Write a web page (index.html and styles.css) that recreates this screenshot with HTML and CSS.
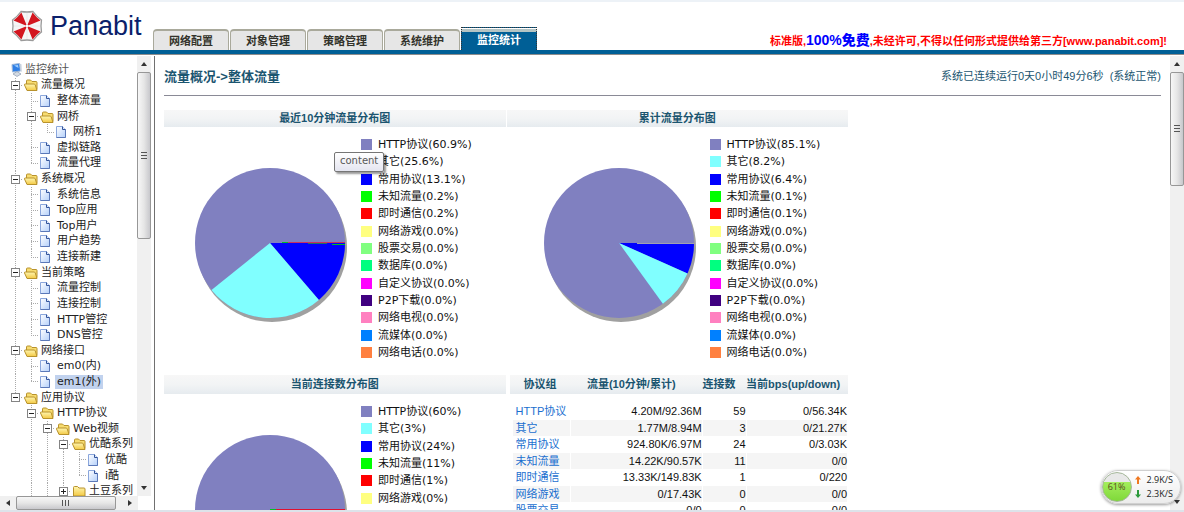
FILE: index.html
```html
<!DOCTYPE html>
<html lang="zh-CN">
<head>
<meta charset="utf-8">
<title>Panabit</title>
<link rel="stylesheet" href="styles.css">
</head>
<body>
<svg class="defs" aria-hidden="true">
  <defs>
    <linearGradient id="gold" x1="0" y1="0" x2="0" y2="1"><stop offset="0" stop-color="#fff6b0"/><stop offset="1" stop-color="#f3c944"/></linearGradient>
    <linearGradient id="sheet" x1="0" y1="0" x2="1" y2="1"><stop offset="0" stop-color="#ffffff"/><stop offset="1" stop-color="#b4d0fa"/></linearGradient>
    <symbol id="open" viewBox="0 0 16 14">
      <path d="M3.500 11.500V3q0-1 1-1h3L9 3.500h4q1 0 1 1v7z" fill="#f7dc70" stroke="#b8922c"/>
      <path d="M4 12.500L1.500 7q-.3-1 .8-1h8.700q.8 0 1.200.8L14 12.500z" fill="url(#gold)" stroke="#b8922c"/>
    </symbol>
    <symbol id="closed" viewBox="0 0 16 14">
      <path d="M2.500 12V3.500q0-1 1-1h3L8 4h5q1 0 1 1v7z" fill="url(#gold)" stroke="#b8922c"/>
    </symbol>
    <symbol id="page" viewBox="0 0 16 14">
      <path d="M1.500 1.500h6l3 3v8h-9z" fill="url(#sheet)" stroke="#8aa6dc"/>
      <path d="M7.500 1.500v3h3" fill="#dfeafc" stroke="#33549b"/>
      <path d="M10.500 4.500v8h-9" fill="none" stroke="#5a78b8"/>
    </symbol>
  </defs>
</svg>

<header class="top">
  <div class="brand">
    <svg class="mark" viewBox="-16 -16 32 32" aria-hidden="true">
      <path d="M-6-14.500Q0-13.500 6-14.500Q9.500-9.500 14.500-6Q13.500 0 14.500 6Q9.500 9.500 6 14.500Q0 13.500-6 14.500Q-9.500 9.500-14.500 6Q-13.500 0-14.500-6Q-9.500-9.500-6-14.500Z" fill="#f6f6f6" stroke="#9a9a9a" stroke-width="1.300"/>
      <g fill="#d3161f">
        <path d="M0 0L-13.500-5.600Q-9-9-5.600-13.500Z"/>
        <path d="M0 0L5.600-13.500Q9-9 13.500-5.600Z"/>
        <path d="M0 0L13.500 5.600Q9 9 5.600 13.500Z"/>
        <path d="M0 0L-5.600 13.500Q-9 9-13.500 5.600Z"/>
      </g>
      <path d="M0-13V13M-13 0H13" stroke="#dcdcdc" stroke-width=".5"/>
      <circle r="1.300" fill="#fff"/>
    </svg>
    <span class="name">Panabit</span>
  </div>
  <nav class="tabs">
    <a href="#net">网络配置</a>
    <a href="#obj">对象管理</a>
    <a href="#policy">策略管理</a>
    <a href="#sys">系统维护</a>
    <a href="#stat" class="on">监控统计</a>
  </nav>
  <p class="notice">标准版,<b>100%免费</b>,未经许可,不得以任何形式提供给第三方[www.panabit.com]!</p>
</header>

<div class="frames">
  <aside class="side">
    <div class="row">
      <ul class="tree">
        <li class="root"><svg class="pc" viewBox="0 0 13 14" aria-hidden="true"><path d="M2 1.500L9.500.5l1 7.500-8 1z" fill="#2f7fe6" stroke="#9db7d8"/><path d="M4 2.500l4-.5.5 3z" fill="#9fd0ff"/><path d="M9.500.5l2 .8.300 7.700-1.300-1z" fill="#c8d2de"/><path d="M3 11l4-2.500 4 2.500-4 2.500z" fill="#d4dbe3" stroke="#8d9bb0" stroke-width=".7"/></svg><a href="#t0">监控统计</a></li>
        <li><i class="v h"><button aria-label="折叠"></button></i><svg><use href="#open"/></svg><a href="#t1">流量概况</a></li>
        <li><i class="v"></i><i class="v h"></i><svg><use href="#page"/></svg><a href="#t2">整体流量</a></li>
        <li><i class="v"></i><i class="v h"><button aria-label="折叠"></button></i><svg><use href="#open"/></svg><a href="#t3">网桥</a></li>
        <li><i class="v"></i><i class="v"></i><i class="l"></i><svg><use href="#page"/></svg><a href="#t4">网桥1</a></li>
        <li><i class="v"></i><i class="v h"></i><svg><use href="#page"/></svg><a href="#t5">虚拟链路</a></li>
        <li><i class="v"></i><i class="l"></i><svg><use href="#page"/></svg><a href="#t6">流量代理</a></li>
        <li><i class="v h"><button aria-label="折叠"></button></i><svg><use href="#open"/></svg><a href="#t7">系统概况</a></li>
        <li><i class="v"></i><i class="v h"></i><svg><use href="#page"/></svg><a href="#t8">系统信息</a></li>
        <li><i class="v"></i><i class="v h"></i><svg><use href="#page"/></svg><a href="#t9">Top应用</a></li>
        <li><i class="v"></i><i class="v h"></i><svg><use href="#page"/></svg><a href="#t10">Top用户</a></li>
        <li><i class="v"></i><i class="v h"></i><svg><use href="#page"/></svg><a href="#t11">用户趋势</a></li>
        <li><i class="v"></i><i class="l"></i><svg><use href="#page"/></svg><a href="#t12">连接新建</a></li>
        <li><i class="v h"><button aria-label="折叠"></button></i><svg><use href="#open"/></svg><a href="#t13">当前策略</a></li>
        <li><i class="v"></i><i class="v h"></i><svg><use href="#page"/></svg><a href="#t14">流量控制</a></li>
        <li><i class="v"></i><i class="v h"></i><svg><use href="#page"/></svg><a href="#t15">连接控制</a></li>
        <li><i class="v"></i><i class="v h"></i><svg><use href="#page"/></svg><a href="#t16">HTTP管控</a></li>
        <li><i class="v"></i><i class="l"></i><svg><use href="#page"/></svg><a href="#t17">DNS管控</a></li>
        <li><i class="v h"><button aria-label="折叠"></button></i><svg><use href="#open"/></svg><a href="#t18">网络接口</a></li>
        <li><i class="v"></i><i class="v h"></i><svg><use href="#page"/></svg><a href="#t19">em0(内)</a></li>
        <li><i class="v"></i><i class="l"></i><svg><use href="#page"/></svg><a href="#t20" class="sel">em1(外)</a></li>
        <li><i class="l"><button aria-label="折叠"></button></i><svg><use href="#open"/></svg><a href="#t21">应用协议</a></li>
        <li><i></i><i class="v h"><button aria-label="折叠"></button></i><svg><use href="#open"/></svg><a href="#t22">HTTP协议</a></li>
        <li><i></i><i class="v"></i><i class="v h"><button aria-label="折叠"></button></i><svg><use href="#open"/></svg><a href="#t23">Web视频</a></li>
        <li><i></i><i class="v"></i><i class="v"></i><i class="v h"><button aria-label="折叠"></button></i><svg><use href="#open"/></svg><a href="#t24">优酷系列</a></li>
        <li><i></i><i class="v"></i><i class="v"></i><i class="v"></i><i class="v h"></i><svg><use href="#page"/></svg><a href="#t25">优酷</a></li>
        <li><i></i><i class="v"></i><i class="v"></i><i class="v"></i><i class="l"></i><svg><use href="#page"/></svg><a href="#t26">i酷</a></li>
        <li><i></i><i class="v"></i><i class="v"></i><i class="v h"><button class="plus" aria-label="展开"></button></i><svg><use href="#closed"/></svg><a href="#t27">土豆系列</a></li>
      </ul>
      <div class="bar"><span class="arrow up"></span><div class="track"><div class="thumb tall"></div></div><span class="arrow down"></span></div>
    </div>
    <div class="hbar"><span class="arrow left"></span><div class="track"><div class="thumb"></div></div><span class="arrow right"></span></div>
  </aside>

  <main class="main">
    <div class="content">
      <div class="title">
        <h1>流量概况-&gt;整体流量</h1>
        <p>系统已连续运行0天0小时49分6秒&nbsp; (系统正常)</p>
      </div>
      <div class="panels">
        <section class="panel">
          <h2>最近10分钟流量分布图</h2>
          <div class="chart">
            <svg class="pie" viewBox="0 0 166 225" aria-hidden="true">
              <circle cx="77" cy="111" r="75" fill="#a0a0a0"/>
              <circle cx="75" cy="107" r="75" fill="#8080c0"/>
              <path d="M75 107L150 107A75 75 0 0 1 123.900 163.900Z" fill="#0000ff"/>
              <path d="M75 107L123.900 163.900A75 75 0 0 1 16.500 153.900Z" fill="#80ffff"/>
              <path d="M87 106.500H93M137 108.500H150" stroke="#00c020"/>
              <path d="M93 106.500H150" stroke="#c83060"/>
              <path d="M113 107.500H132" stroke="#207060"/>
            </svg>
            <ul class="legend">
              <li class="c1">HTTP协议(60.9%)</li><li class="c2">其它(25.6%)</li><li class="c3">常用协议(13.1%)</li><li class="c4">未知流量(0.2%)</li><li class="c5">即时通信(0.2%)</li><li class="c6">网络游戏(0.0%)</li><li class="c7">股票交易(0.0%)</li><li class="c8">数据库(0.0%)</li><li class="c9">自定义协议(0.0%)</li><li class="c10">P2P下载(0.0%)</li><li class="c11">网络电视(0.0%)</li><li class="c12">流媒体(0.0%)</li><li class="c13">网络电话(0.0%)</li>
            </ul>
            <span class="tip">content</span>
          </div>
        </section>
        <section class="panel second">
          <h2>累计流量分布图</h2>
          <div class="chart">
            <svg class="pie" viewBox="0 0 166 225" aria-hidden="true">
              <circle cx="77" cy="111" r="75" fill="#a0a0a0"/>
              <circle cx="75" cy="107" r="75" fill="#8080c0"/>
              <path d="M75 107L150 107A75 75 0 0 1 143.500 137.500Z" fill="#0000ff"/>
              <path d="M75 107L143.500 137.500A75 75 0 0 1 118.900 167.800Z" fill="#80ffff"/>
              <path d="M93 107.500H150" stroke="#a0a0b0"/>
            </svg>
            <ul class="legend">
              <li class="c1">HTTP协议(85.1%)</li><li class="c2">其它(8.2%)</li><li class="c3">常用协议(6.4%)</li><li class="c4">未知流量(0.1%)</li><li class="c5">即时通信(0.1%)</li><li class="c6">网络游戏(0.0%)</li><li class="c7">股票交易(0.0%)</li><li class="c8">数据库(0.0%)</li><li class="c9">自定义协议(0.0%)</li><li class="c10">P2P下载(0.0%)</li><li class="c11">网络电视(0.0%)</li><li class="c12">流媒体(0.0%)</li><li class="c13">网络电话(0.0%)</li>
            </ul>
          </div>
        </section>
        <section class="panel lower">
          <h2>当前连接数分布图</h2>
          <div class="chart">
            <svg class="pie" viewBox="0 0 166 225" aria-hidden="true">
              <circle cx="77" cy="111" r="75" fill="#a0a0a0"/>
              <circle cx="75" cy="107" r="75" fill="#8080c0"/>
              <path d="M75 106.500H81" stroke="#00c020"/>
              <path d="M81 106.500H150" stroke="#e01030"/>
            </svg>
            <ul class="legend">
              <li class="c1">HTTP协议(60%)</li><li class="c2">其它(3%)</li><li class="c3">常用协议(24%)</li><li class="c4">未知流量(11%)</li><li class="c5">即时通信(1%)</li><li class="c6">网络游戏(0%)</li><li class="c7"></li>
            </ul>
          </div>
        </section>
        <section class="panel lower">
          <table>
            <colgroup><col class="w1"><col class="w2"><col class="w3"><col class="w4"></colgroup>
            <thead><tr><th>协议组</th><th>流量(10分钟/累计)</th><th>连接数</th><th>当前bps(up/down)</th></tr></thead>
            <tbody>
              <tr><td><a href="#p1">HTTP协议</a></td><td>4.20M/92.36M</td><td>59</td><td>0/56.34K</td></tr>
              <tr><td><a href="#p2">其它</a></td><td>1.77M/8.94M</td><td>3</td><td>0/21.27K</td></tr>
              <tr><td><a href="#p3">常用协议</a></td><td>924.80K/6.97M</td><td>24</td><td>0/3.03K</td></tr>
              <tr><td><a href="#p4">未知流量</a></td><td>14.22K/90.57K</td><td>11</td><td>0/0</td></tr>
              <tr><td><a href="#p5">即时通信</a></td><td>13.33K/149.83K</td><td>1</td><td>0/220</td></tr>
              <tr><td><a href="#p6">网络游戏</a></td><td>0/17.43K</td><td>0</td><td>0/0</td></tr>
              <tr><td><a href="#p7">股票交易</a></td><td>0/0</td><td>0</td><td>0/0</td></tr>
            </tbody>
          </table>
        </section>
      </div>
    </div>
    <div class="bar"><span class="arrow up"></span><div class="track"><div class="thumb short"></div></div><span class="arrow down"></span></div>
  </main>
</div>

<div class="meter">
  <span class="ball">61%</span>
  <div class="rates">
    <span><svg viewBox="0 0 8 8" aria-hidden="true"><path d="M4 0L7 3.500H5V8H3V3.500H1Z" fill="#f07820"/></svg>2.9K/S</span>
    <span><svg viewBox="0 0 8 8" aria-hidden="true"><path d="M4 8L7 4.500H5V0H3V4.500H1Z" fill="#2c9a3c"/></svg>2.3K/S</span>
  </div>
</div>
</body>
</html>
```
FILE: styles.css
```css
* { box-sizing: border-box; }
body {
  margin: 0;
  height: 100vh;
  display: flex;
  flex-direction: column;
  overflow: hidden;
  background: #fff;
  border-top: 2px solid #edf2f7;
  border-bottom: 2px solid #dde3ea;
  font: 11px/15px "Liberation Sans", "Noto Sans CJK SC", sans-serif;
  color: #222;
}
h1, h2, p, ul { margin: 0; padding: 0; }
ul { list-style: none; }
a { text-decoration: none; color: inherit; }
.defs { position: absolute; width: 0; height: 0; }

/* header */
.top {
  display: flex;
  align-items: flex-end;
  flex: none;
  height: 52px;
  border-bottom: 4px solid #005f96;
  box-shadow: 0 1px #8c8c8c;
}
.brand {
  display: flex;
  align-items: center;
  gap: 7px;
  width: 153px;
  height: 48px;
  padding: 0 0 0 11px;
}
.mark { width: 32px; height: 32px; flex: none; }
.name { font-size: 27px; line-height: 32px; color: #0b1f6b; }
.tabs { display: flex; align-items: flex-end; gap: 1px; }
.tabs a {
  width: 76px;
  height: 21px;
  border: 1px solid #a9a99b;
  border-top-width: 2px;
  border-bottom: 0;
  border-radius: 4px 4px 0 0;
  background: #e6e6e6;
  color: #33332b;
  font-weight: bold;
  line-height: 21px;
  text-align: center;
}
.tabs .on {
  height: 23px;
  border: 1px dotted #333;
  border-bottom: 0;
  border-radius: 0;
  background: linear-gradient(#fff 0 1px, #b4c4c4 1px 4px, #005f96 4px);
  color: #fff;
  line-height: 25px;
}
.notice {
  flex: 1;
  padding: 0 17px 0 0;
  text-align: right;
  color: #f00;
  font-weight: bold;
  line-height: 18px;
  white-space: nowrap;
}
.notice b { font-size: 14px; color: #00f; }

/* frames */
.frames { display: flex; flex: 1; min-height: 0; padding-top: 2px; }
.side { display: flex; flex-direction: column; flex: none; width: 154px; padding-right: 3px; }
.row { display: flex; flex: 1; min-height: 0; overflow: hidden; }
.main { display: flex; flex: 1; min-width: 0; border-left: 1px solid #707070; }

/* tree */
.tree {
  flex: 1;
  min-width: 0;
  display: grid;
  grid-auto-rows: minmax(0, 1fr);
  margin-bottom: -3px;
  padding: 6px 0 0 7px;
  overflow: hidden;
  font-family: "DejaVu Sans", "Noto Sans CJK SC", sans-serif;
}
.tree li { display: flex; align-items: center; min-width: 0; }
.tree i { flex: none; align-self: stretch; display: flex; align-items: center; justify-content: center; width: 16px; background-repeat: no-repeat; }
.tree .v { background-image: repeating-linear-gradient(#aaa 0 1px, transparent 1px 2px); background-size: 1px 100%; background-position: 8px 0; }
.tree .h { background-image: repeating-linear-gradient(#aaa 0 1px, transparent 1px 2px), repeating-linear-gradient(90deg, #aaa 0 1px, transparent 1px 2px); background-size: 1px 100%, 8px 1px; background-position: 8px 0, 8px 50%; }
.tree .l { background-image: repeating-linear-gradient(#aaa 0 1px, transparent 1px 2px), repeating-linear-gradient(90deg, #aaa 0 1px, transparent 1px 2px); background-size: 1px 50%, 8px 1px; background-position: 8px 0, 8px 50%; }
.tree svg { flex: none; width: 16px; height: 14px; }
.tree .root { padding-left: 3px; color: #555; }
.tree .root .pc { width: 13px; }
.tree a { padding: 0 2px; line-height: 14px; white-space: nowrap; }
.tree .sel { background: #c1d2ee; }
.tree button {
  width: 9px;
  height: 9px;
  padding: 0;
  border: 1px solid #848484;
  background: linear-gradient(#222, #222) center / 5px 1px no-repeat #fff;
}
.tree .plus { background: linear-gradient(#222, #222) center / 5px 1px no-repeat, linear-gradient(#222, #222) center / 1px 5px no-repeat #fff; }

/* scroll bars */
.bar { display: flex; flex-direction: column; flex: none; width: 14px; background: #f0f0f0; }
.hbar { display: flex; flex: none; width: 138px; height: 14px; background: #f0f0f0; }
.track { flex: 1; }
.arrow { flex: none; display: grid; place-items: center; width: 16px; height: 16px; }
.bar .arrow { width: 14px; }
.hbar .arrow { height: 14px; }
.arrow::before { content: ""; border: 3px solid transparent; }
.up::before { border-bottom: 4px solid #333; border-top: 0; }
.down::before { border-top: 4px solid #333; border-bottom: 0; }
.left::before { border-right: 4px solid #333; border-left: 0; }
.right::before { border-left: 4px solid #333; border-right: 0; }
.thumb { display: grid; place-items: center; border: 1px solid #979797; border-radius: 2px; background: linear-gradient(90deg, #f7f7f7, #e6e6e6 50%, #c8c8cc); }
.thumb::before { content: ""; width: 6px; height: 7px; background: repeating-linear-gradient(#555 0 1px, transparent 1px 3px); }
.tall { height: 41%; }
.short { height: 27%; }
.hbar .thumb { width: 94%; height: 14px; background: linear-gradient(#f7f7f7, #e6e6e6 50%, #c8c8cc); }
.hbar .thumb::before { width: 7px; height: 6px; background: repeating-linear-gradient(90deg, #555 0 1px, transparent 1px 3px); }

/* content */
.content { flex: 1; min-width: 0; overflow: hidden; padding: 0 9px; }
.title {
  display: flex;
  justify-content: space-between;
  align-items: center;
  height: 40px;
  padding-top: 2px;
  border-bottom: 1px solid #8a8a96;
  color: #1b5570;
  white-space: nowrap;
}
.title h1 { font-size: 13px; line-height: 18px; }
.panels { display: grid; grid-template-columns: 1fr 1fr; gap: 14px 1px; width: 68%; min-width: 684px; padding-top: 14px; }
.panel h2, th {
  height: 17px;
  background: linear-gradient(#f7f7f7, #f2f4f5 50%, #e6ebef);
  color: #1b5570;
  font-size: 11px;
  font-weight: bold;
  line-height: 17px;
  text-align: center;
}
.lower h2, th { height: 19px; line-height: 19px; }
.chart { position: relative; display: flex; padding: 9px 0 0 31px; }
.second .chart { padding-left: 37px; }
.pie { flex: none; width: 166px; height: 225px; }
.legend { display: grid; grid-template-rows: repeat(13, 1fr); font-family: "DejaVu Sans", "Noto Sans CJK SC", sans-serif; color: #111; }
.legend li { display: flex; align-items: center; gap: 6px; white-space: nowrap; }
.legend li::before { content: ""; width: 11px; height: 11px; background: var(--c); }
.c1 { --c: #8080c0; }
.c2 { --c: #80ffff; }
.c3 { --c: #0000ff; }
.c4 { --c: #00ff00; }
.c5 { --c: #ff0000; }
.c6 { --c: #ffff80; }
.c7 { --c: #80ff80; }
.c8 { --c: #00ff80; }
.c9 { --c: #ff00ff; }
.c10 { --c: #400080; }
.c11 { --c: #ff80c0; }
.c12 { --c: #0080ff; }
.c13 { --c: #ff8040; }
.tip {
  position: absolute;
  left: 170px;
  top: 25px;
  padding: 0 5px 2px;
  border: 1px solid #767676;
  border-radius: 2px;
  background: linear-gradient(#fff, #e4e5f0);
  box-shadow: 2px 2px 2px rgba(0, 0, 0, .4);
  font: 10px/16px "DejaVu Sans", sans-serif;
  color: #575757;
}

/* protocol table */
table { width: 100%; border-collapse: collapse; table-layout: fixed; }
.w1 { width: 18%; }
.w2 { width: 39%; }
.w3 { width: 13%; }
.w4 { width: 30%; }
th { padding: 0 10px 0 0; white-space: nowrap; }
th:first-child { padding: 0; }
td { height: 16px; padding: 0; border-right: 1px solid #fff; border-bottom: 1px solid #fff; color: #111; line-height: 15px; text-align: right; white-space: nowrap; }
td:first-child { border-left: 6px solid #fff; padding-left: 3px; text-align: left; }
td a { color: #1a6fcf; }
tr:nth-child(even) td { height: 17px; background: #f5f5f5; }
tbody tr:first-child td { padding-top: 10px; }

/* floating speed meter */
.meter {
  position: absolute;
  right: 3px;
  bottom: 8px;
  display: flex;
  align-items: center;
  gap: 2px;
  padding: 1px 7px 1px 0;
  border: 1px solid #d0d0d0;
  border-radius: 17px;
  background: linear-gradient(#fff, #ececec);
  box-shadow: 0 1px 3px rgba(0, 0, 0, .4);
  font: 9px/14px "Open Sans", sans-serif;
}
.ball {
  width: 30px;
  height: 30px;
  border: 1px solid #a5b79a;
  border-radius: 50%;
  background: linear-gradient(#e8e8e8 0 32%, #a4ee5c 32%, #7fd83a);
  color: #5a4a20;
  line-height: 28px;
  text-align: center;
}
.rates { display: grid; }
.rates span { display: flex; align-items: center; gap: 5px; }
.rates svg { width: 8px; height: 8px; }
```
